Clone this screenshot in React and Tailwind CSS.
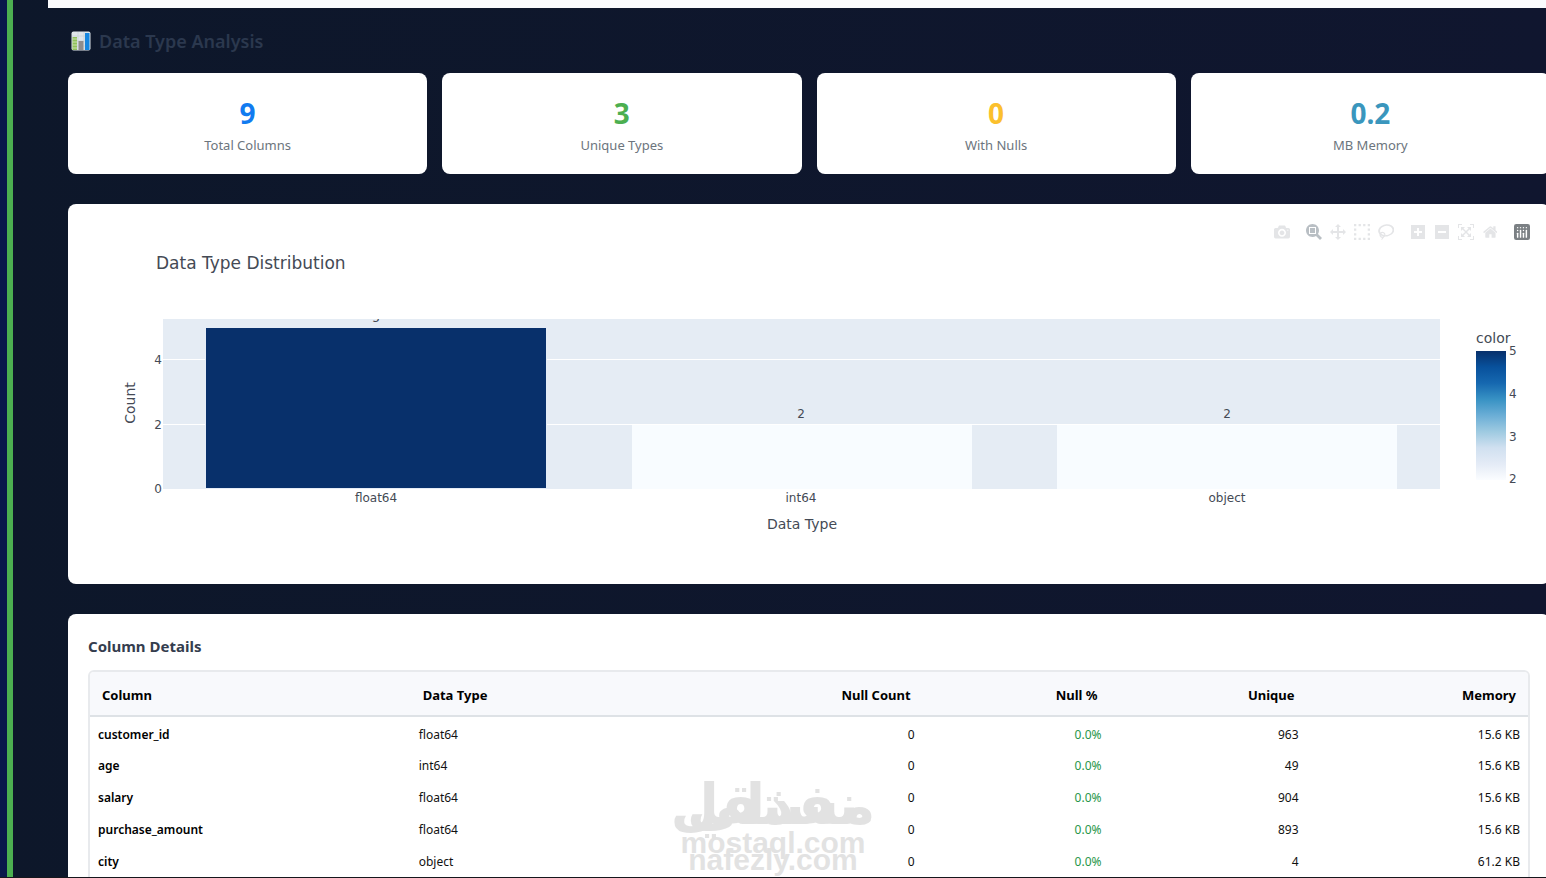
const stats = [
    { value: '9', label: 'Total Columns', color: 'text-[#117bf0]' },
    { value: '3', label: 'Unique Types', color: 'text-[#4caf50]' },
    { value: '0', label: 'With Nulls', color: 'text-[#fbc02d]' },
    { value: '0.2', label: 'MB Memory', color: 'text-[#3a96bd]' },
];

const columns = [
    { name: 'customer_id', type: 'float64', nulls: 0, percent: '0.0%', unique: 963, memory: '15.6 KB' },
    { name: 'age', type: 'int64', nulls: 0, percent: '0.0%', unique: 49, memory: '15.6 KB' },
    { name: 'salary', type: 'float64', nulls: 0, percent: '0.0%', unique: 904, memory: '15.6 KB' },
    { name: 'purchase_amount', type: 'float64', nulls: 0, percent: '0.0%', unique: 893, memory: '15.6 KB' },
    { name: 'city', type: 'object', nulls: 0, percent: '0.0%', unique: 4, memory: '61.2 KB' },
];

// Toolbar icons use a flipped 1000 unit grid
const toolGroups = [
    [
        {
            label: 'Download plot as a png',
            width: 1000,
            path: 'm500 450c-83 0-150-67-150-150 0-83 67-150 150-150 83 0 150 67 150 150 0 83-67 150-150 150z m400 150h-120c-16 0-34 13-39 29l-31 93c-6 15-23 28-40 28h-340c-16 0-34-13-39-28l-31-94c-6-15-23-28-40-28h-120c-55 0-100-45-100-100v-450c0-55 45-100 100-100h800c55 0 100 45 100 100v450c0 55-45 100-100 100z m-400-550c-138 0-250 112-250 250 0 138 112 250 250 250 138 0 250-112 250-250 0-138-112-250-250-250z m365 380c-19 0-35 16-35 35 0 19 16 35 35 35 19 0 35-16 35-35 0-19-16-35-35-35z',
        },
    ],
    [
        {
            label: 'Zoom',
            width: 1000,
            active: true,
            path: 'm1000-25l-250 251c40 63 63 138 63 218 0 224-182 406-407 406-224 0-406-182-406-406s183-406 407-406c80 0 155 22 218 62l250-250 125 125z m-812 250l0 438 437 0 0-438-437 0z m62 375l313 0 0-312-313 0 0 312z',
        },
        {
            label: 'Pan',
            width: 1000,
            path: 'm1000 350l-187 188 0-125-250 0 0 250 125 0-188 187-187-187 125 0 0-250-250 0 0 125-188-188 186-187 0 125 252 0 0-250-125 0 187-188 188 188-125 0 0 250 250 0 0-126 187 188z',
        },
        {
            label: 'Box Select',
            width: 1000,
            path: 'm0 850l0-143 143 0 0 143-143 0z m286 0l0-143 143 0 0 143-143 0z m285 0l0-143 143 0 0 143-143 0z m286 0l0-143 143 0 0 143-143 0z m-857-286l0-143 143 0 0 143-143 0z m857 0l0-143 143 0 0 143-143 0z m-857-285l0-143 143 0 0 143-143 0z m857 0l0-143 143 0 0 143-143 0z m-857-286l0-143 143 0 0 143-143 0z m286 0l0-143 143 0 0 143-143 0z m285 0l0-143 143 0 0 143-143 0z m286 0l0-143 143 0 0 143-143 0z',
        },
        {
            label: 'Lasso Select',
            width: 1031,
            path: 'm1018 538c-36 207-290 336-568 286-277-48-473-256-436-463 10-57 36-108 76-151-13-66 11-137 68-183 34-28 75-41 114-42l-55-70 0 0c-2-1-3-2-4-3-10-14-8-34 5-45 14-11 34-8 45 4 1 1 2 3 2 5l0 0 113 140c16 11 31 24 45 40 4 3 6 7 8 11 48-3 100 0 151 9 278 48 473 255 436 462z m-624-379c-80 14-149 48-197 96 42 42 109 47 156 9 33-26 47-66 41-105z m-187-74c-19 16-33 37-39 60 50-32 109-55 174-68-42-25-95-24-135 8z m360 75c-34-7-69-9-102-8 8 62-16 128-68 170-73 59-175 54-244-5-9 20-16 40-20 61-28 159 121 317 333 354s407-60 434-217c28-159-121-318-333-355z',
        },
    ],
    [
        {
            label: 'Zoom in',
            width: 875,
            path: 'm1 787l0-875 875 0 0 875-875 0z m687-500l-187 0 0-187-125 0 0 187-188 0 0 125 188 0 0 187 125 0 0-187 187 0 0-125z',
        },
        {
            label: 'Zoom out',
            width: 875,
            path: 'm0 788l0-876 875 0 0 876-875 0z m688-500l-500 0 0 125 500 0 0-125z',
        },
        {
            label: 'Autoscale',
            width: 1000,
            path: 'm250 850l-187 0-63 0 0-62 0-188 63 0 0 188 187 0 0 62z m688 0l-188 0 0-62 188 0 0-188 62 0 0 188 0 62-62 0z m-875-938l0 188-63 0 0-188 0-62 63 0 187 0 0 62-187 0z m875 188l0-188-188 0 0-62 188 0 62 0 0 62 0 188-62 0z m-125 188l-1 0-93-94-156 156 156 156 92-93 2 0 0 250-250 0 0-2 93-92-156-156-156 156 94 92 0 2-250 0 0-250 0 0 93 93 157-156-157-156-93 94 0 0 0-250 250 0 0 0-94 93 156 157 156-157-93-93 0 0 250 0 0 250z',
        },
        {
            label: 'Reset axes',
            width: 928,
            path: 'm786 296v-267q0-15-11-26t-25-10h-214v214h-143v-214h-214q-15 0-25 10t-11 26v267q0 1 0 2t0 2l321 264 321-264q1-1 1-4z m124 39l-34-41q-5-5-12-6h-2q-7 0-12 3l-386 322-386-322q-7-4-13-4-7 2-12 7l-35 41q-4 5-3 13t6 12l401 334q18 15 42 15t43-15l136-114v109q0 8 5 13t13 5h107q8 0 13-5t5-13v-227l122-102q5-5 6-12t-4-13z',
        },
    ],
];

function BarChartIcon() {
    return (
        <svg viewBox="0 0 20 20" className="size-5" aria-hidden="true">
            <rect x="0.5" y="0.5" width="19" height="19" rx="2" fill="#dfe5ea" />
            <path d="M1 5h18M1 10h18M1 15h18M7 1v18M13 1v18" stroke="#c3ccd3" strokeWidth="0.6" />
            <rect x="1.5" y="6" width="4.5" height="13" fill="#8fc15a" />
            <path d="M1.5 8h4.5M1.5 11h4.5M1.5 14h4.5M1.5 17h4.5" stroke="#d9e8c4" strokeWidth="0.8" />
            <rect x="7.5" y="10" width="5" height="9" fill="#8f8d8c" />
            <rect x="14" y="2" width="4.5" height="17" fill="#1687e0" />
        </svg>
    );
}

function ToolbarLogo() {
    return (
        <svg viewBox="0 0 132 132" className="size-4" aria-hidden="true">
            <rect width="132" height="132" rx="18" fill="#7b8084" />
            <g fill="#fff">
                <circle cx="30" cy="30" r="6" />
                <circle cx="54" cy="30" r="6" />
                <circle cx="78" cy="30" r="6" />
                <circle cx="102" cy="30" r="6" />
                <circle cx="30" cy="54" r="6" />
                <circle cx="78" cy="54" r="6" />
                <rect x="24" y="72" width="12" height="42" rx="5" />
                <rect x="48" y="48" width="12" height="66" rx="5" />
                <rect x="72" y="72" width="12" height="42" rx="5" />
                <rect x="96" y="48" width="12" height="66" rx="5" />
            </g>
        </svg>
    );
}

function ChartToolbar() {
    return (
        <div className="absolute top-4 right-4 flex gap-2">
            {toolGroups.map((group, index) => (
                <div key={index} className="flex">
                    {group.map((tool) => (
                        <button
                            key={tool.label}
                            type="button"
                            aria-label={tool.label}
                            className={`flex size-6 items-center justify-center ${tool.active ? 'text-[#b9bfc4]' : 'text-[#e4e5e7]'}`}
                        >
                            <svg viewBox={`0 0 ${tool.width} 1000`} className="h-4" fill="currentColor" aria-hidden="true">
                                <path d={tool.path} transform="matrix(1 0 0 -1 0 850)" />
                            </svg>
                        </button>
                    ))}
                </div>
            ))}
            <a href="#plotly" aria-label="Produced with Plotly" className="flex size-6 items-center justify-center">
                <ToolbarLogo />
            </a>
        </div>
    );
}

function DistributionChart() {
    return (
        <svg
            viewBox="0 0 1482 380"
            className="w-full font-['Verdana','DejaVu_Sans',sans-serif]"
            fill="#444a55"
            role="img"
            aria-label="Data Type Distribution"
        >
            <defs>
                <linearGradient id="scale" x1="0" y1="0" x2="0" y2="1">
                    <stop offset="0" stopColor="#08306b" />
                    <stop offset="0.125" stopColor="#08519c" />
                    <stop offset="0.25" stopColor="#1668b0" />
                    <stop offset="0.375" stopColor="#3892c4" />
                    <stop offset="0.5" stopColor="#6baed6" />
                    <stop offset="0.625" stopColor="#9ecae1" />
                    <stop offset="0.75" stopColor="#d0e0f0" />
                    <stop offset="0.875" stopColor="#e4ebf6" />
                    <stop offset="1" stopColor="#fbfdff" />
                </linearGradient>
                <clipPath id="plot">
                    <rect x="95" y="115" width="1277" height="170" />
                </clipPath>
            </defs>

            <text x="88" y="65" fontSize="17">Data Type Distribution</text>

            {/* Plot area */}
            <rect x="95" y="115" width="1277" height="170" fill="#e5ecf4" />
            <path d="M95 155.500H1372M95 220.500H1372" stroke="#fff" />
            <rect x="137.500" y="123.500" width="341" height="161" fill="#08306b" stroke="#e5ecf6" />
            <rect x="564" y="221" width="340" height="64" fill="#f8fcff" />
            <rect x="989" y="221" width="340" height="64" fill="#f8fcff" />

            {/* Bar values */}
            <g fontSize="12" textAnchor="middle">
                <text x="308" y="118" clipPath="url(#plot)">5</text>
                <text x="733" y="214">2</text>
                <text x="1159" y="214">2</text>
                <text x="308" y="298">float64</text>
                <text x="733" y="298">int64</text>
                <text x="1159" y="298">object</text>
            </g>

            {/* Axes */}
            <g fontSize="12" textAnchor="end">
                <text x="94" y="160">4</text>
                <text x="94" y="225">2</text>
                <text x="94" y="289">0</text>
            </g>
            <text x="734" y="325" fontSize="14" textAnchor="middle">Data Type</text>
            <text transform="translate(67 199) rotate(-90)" fontSize="14" textAnchor="middle">Count</text>

            {/* Color scale */}
            <text x="1408" y="139" fontSize="14">color</text>
            <rect x="1408" y="147" width="30" height="129" fill="url(#scale)" />
            <g fontSize="12">
                <text x="1441" y="151">5</text>
                <text x="1441" y="194">4</text>
                <text x="1441" y="237">3</text>
                <text x="1441" y="279">2</text>
            </g>
        </svg>
    );
}

function ColumnTable() {
    return (
        <table className="w-full table-fixed text-xs text-[#111]">
            <colgroup>
                <col className="w-[22.3%]" />
                <col className="w-[20%]" />
                <col className="w-[15.6%]" />
                <col className="w-[13%]" />
                <col className="w-[13.7%]" />
                <col />
            </colgroup>
            <thead className="bg-[#f8f9fc] text-[13px] text-black">
                <tr className="h-11 border-b-2 border-[#dee2e6]">
                    <th className="px-3 pt-1 text-left font-bold">Column</th>
                    <th className="px-3 pt-1 text-left font-bold">Data Type</th>
                    <th className="px-3 pt-1 text-right font-bold">Null Count</th>
                    <th className="px-3 pt-1 text-right font-bold">Null %</th>
                    <th className="px-3 pt-1 text-right font-bold">Unique</th>
                    <th className="px-3 pt-1 text-right font-bold">Memory</th>
                </tr>
            </thead>
            <tbody>
                {columns.map((column) => (
                    <tr key={column.name} className="h-8">
                        <td className="px-2 pt-1 font-semibold text-black">{column.name}</td>
                        <td className="px-2 pt-1">{column.type}</td>
                        <td className="px-2 pt-1 text-right">{column.nulls}</td>
                        <td className="px-2 pt-1 text-right text-[#28964a]">{column.percent}</td>
                        <td className="px-2 pt-1 text-right">{column.unique}</td>
                        <td className="px-2 pt-1 text-right">{column.memory}</td>
                    </tr>
                ))}
            </tbody>
        </table>
    );
}

function Watermark() {
    return (
        <div className="pointer-events-none absolute bottom-0 left-[680px] h-[106px] w-[186px] font-['DejaVu_Sans',sans-serif] font-bold text-[#8f8f8f] opacity-25 select-none">
            <svg viewBox="0 0 186 106" className="size-full overflow-visible" fill="currentColor">
                <g fontSize="56" textAnchor="middle">
                    <text x="93" y="53">مستقل</text>
                    <text x="93" y="53">نفذلي</text>
                </g>
                <g className="font-['Liberation_Sans',sans-serif]" fontSize="30" textAnchor="middle">
                    <text x="93" y="82">mostaql.com</text>
                    <text x="93" y="99">nafezly.com</text>
                </g>
            </svg>
        </div>
    );
}

export default function App() {
    return (
        <div className="relative flex h-screen overflow-hidden border-b border-[#16161c] bg-linear-to-r from-[#0d172a] to-[#10162f] font-['Segoe_UI','Noto_Sans',sans-serif]">
            <div className="w-[7px] shrink-0 bg-[#09184a]"></div>
            <div className="w-1.5 shrink-0 bg-[#4caf50]"></div>

            <main className="-mr-1 min-w-0 flex-1 pl-[35px]">
                <div className="h-2 bg-[#fafbfd]"></div>

                <div className="pl-5">
                    {/* Section title */}
                    <h2 className="flex h-[65px] items-center gap-2 pl-[3px] text-lg font-semibold text-[#2b384e]">
                        <BarChartIcon />
                        Data Type Analysis
                    </h2>

                    {/* Summary cards */}
                    <div className="grid grid-cols-4 gap-[15px]">
                        {stats.map((stat) => (
                            <div key={stat.label} className="flex h-[101px] flex-col items-center justify-center rounded-lg bg-white pt-0.5">
                                <div className={`text-[28px] leading-10 font-bold ${stat.color}`}>{stat.value}</div>
                                <div className="text-[13px] leading-6 text-[#6c757d]">{stat.label}</div>
                            </div>
                        ))}
                    </div>

                    {/* Distribution chart */}
                    <section className="relative mt-[30px] rounded-lg bg-white">
                        <DistributionChart />
                        <ChartToolbar />
                    </section>

                    {/* Column details */}
                    <section className="mt-[30px] rounded-t-lg bg-white px-5 pt-5 pb-10">
                        <h3 className="mb-3 text-[15px] leading-6 font-bold text-[#343d4e]">Column Details</h3>
                        <div className="overflow-hidden rounded-md border-2 border-[#e8eaed] pb-6">
                            <ColumnTable />
                        </div>
                    </section>
                </div>
            </main>

            <Watermark />
        </div>
    );
}
